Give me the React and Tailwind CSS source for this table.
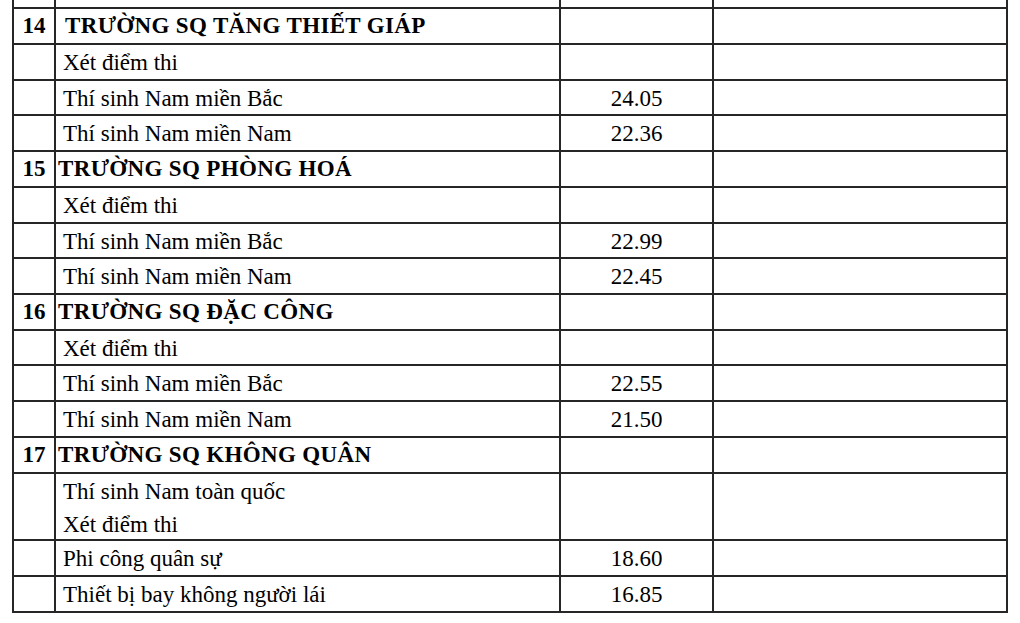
import React from "react";

const rows = [
  { h: 36, num: "14", text: "TRƯỜNG SQ TĂNG THIẾT GIÁP", bold: true, pl: "pl-[9px]" },
  { h: 36, text: "Xét điểm thi" },
  { h: 35, text: "Thí sinh Nam miền Bắc", score: "24.05" },
  { h: 36, text: "Thí sinh Nam miền Nam", score: "22.36" },
  { h: 36, num: "15", text: "TRƯỜNG SQ PHÒNG HOÁ", bold: true },
  { h: 36, text: "Xét điểm thi" },
  { h: 35, text: "Thí sinh Nam miền Bắc", score: "22.99" },
  { h: 36, text: "Thí sinh Nam miền Nam", score: "22.45" },
  { h: 36, num: "16", text: "TRƯỜNG SQ ĐẶC CÔNG", bold: true },
  { h: 35, text: "Xét điểm thi" },
  { h: 36, text: "Thí sinh Nam miền Bắc", score: "22.55" },
  { h: 36, text: "Thí sinh Nam miền Nam", score: "21.50" },
  { h: 36, num: "17", text: "TRƯỜNG SQ KHÔNG QUÂN", bold: true },
  { h: 67, text: ["Thí sinh Nam toàn quốc", "Xét điểm thi"] },
  { h: 36, text: "Phi công quân sự", score: "18.60" },
  { h: 36, text: "Thiết bị bay không người lái", score: "16.85" },
];

function Row({ r }) {
  const heightCls = {
    35: "h-[35px]",
    36: "h-[36px]",
    67: "h-[67px]",
  }[r.h];
  return (
    <div className={`flex ${heightCls} border-t-2 border-[#262626]`}>
      <div className="w-[42px] shrink-0 border-r-2 border-[#262626] text-center font-bold leading-[33px]">
        {r.num || ""}
      </div>
      <div
        className={`w-[505px] shrink-0 border-r-2 border-[#262626] leading-[33px] whitespace-nowrap ${
          r.bold ? `font-bold tracking-[0.35px] ${r.pl || "pl-[2px]"}` : "pl-[7px] pt-[1px]"
        }`}
      >
        {Array.isArray(r.text)
          ? r.text.map((t, i) => <div key={i}>{t}</div>)
          : r.text}
      </div>
      <div className="w-[153px] shrink-0 border-r-2 border-[#262626] text-center leading-[33px] pt-[1px]">
        {r.score || ""}
      </div>
      <div className="flex-1" />
    </div>
  );
}

export default function App() {
  return (
    <div className="w-[1020px] h-[623px] bg-white overflow-hidden text-black text-[23px] font-['Liberation_Serif','Times_New_Roman',serif]">
      <div className="ml-[12px] w-[996px] border-l-2 border-r-2 border-b-2 border-[#262626]">
        <div className="flex h-[7px]">
          <div className="w-[42px] shrink-0 border-r-2 border-[#262626]" />
          <div className="w-[505px] shrink-0 border-r-2 border-[#262626]" />
          <div className="w-[153px] shrink-0 border-r-2 border-[#262626]" />
          <div className="flex-1" />
        </div>
        {rows.map((r, i) => (
          <Row key={i} r={r} />
        ))}
      </div>
    </div>
  );
}
